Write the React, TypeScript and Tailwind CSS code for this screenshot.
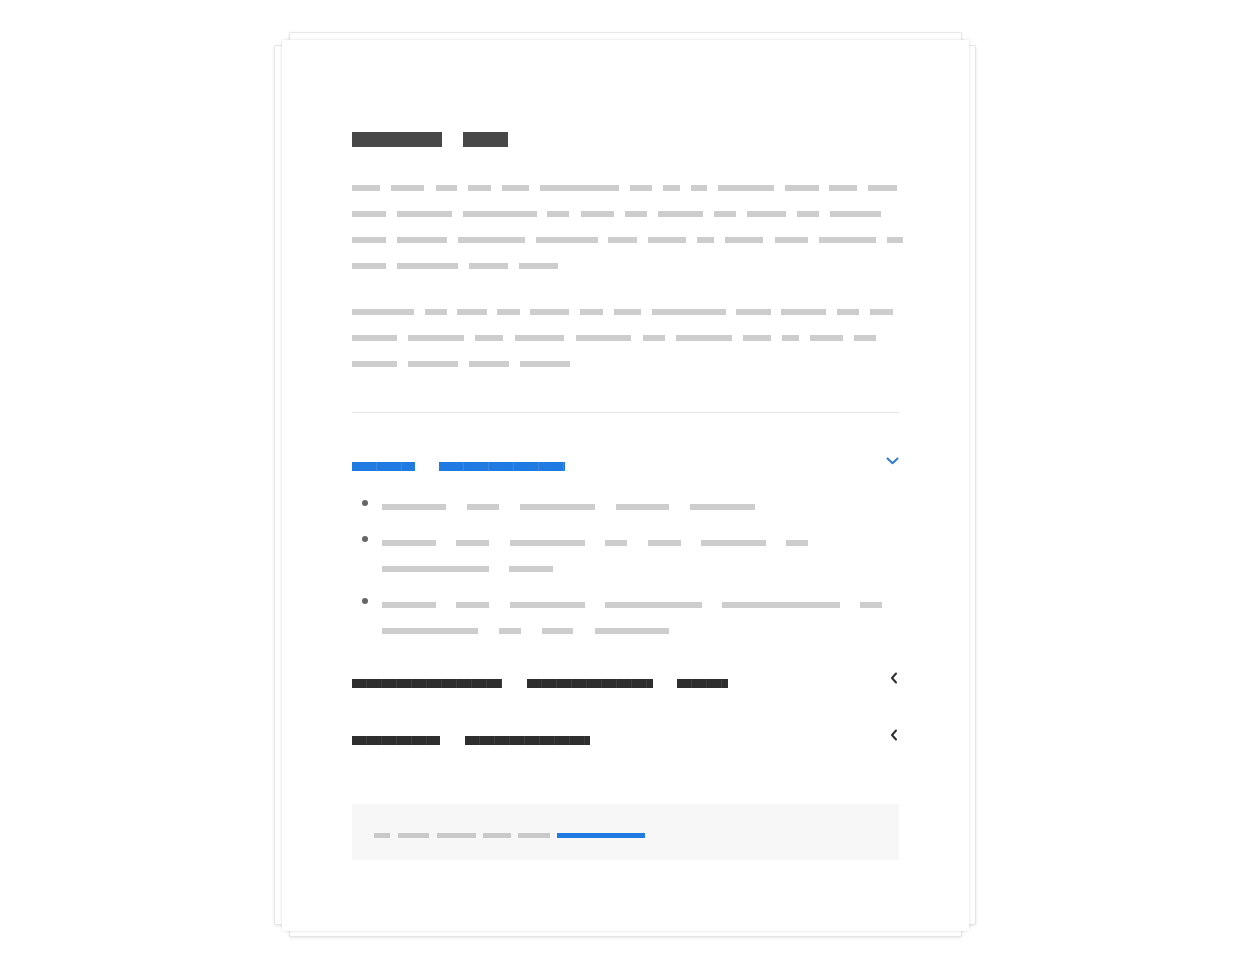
import React from "react";

type Seg = [number, number];

function Bars({
  segs,
  origin,
  color,
  h,
  rowH,
  pattern,
}: {
  segs: Seg[];
  origin: number;
  color: string;
  h: number;
  rowH: number;
  pattern?: string;
}) {
  let prev = origin;
  return (
    <div className="flex items-center whitespace-nowrap" style={{ height: rowH }}>
      {segs.map(([s, e], i) => {
        const ml = s - prev;
        prev = e;
        return (
          <span
            key={i}
            className="block shrink-0"
            style={{
              marginLeft: ml,
              width: e - s,
              height: h,
              background: pattern ?? color,
            }}
          />
        );
      })}
    </div>
  );
}

const GREY = "#cdcdcd";
const DARK_PATTERN =
  "repeating-linear-gradient(90deg,#2e2e2e 0px,#2e2e2e 14px,#3d3d3d 14px,#3d3d3d 15px)";
const BLUE_PATTERN =
  "repeating-linear-gradient(90deg,#1f7be1 0px,#1f7be1 24px,#3a8ae4 24px,#3a8ae4 25px)";

const P1: Seg[][] = [
  [[352, 380], [391, 424], [436, 457], [468, 491], [502, 529], [540, 619], [630, 652], [663, 680], [691, 707], [718, 774], [785, 819], [829, 857], [868, 897]],
  [[352, 386], [397, 452], [463, 537], [547, 569], [581, 614], [625, 647], [658, 703], [714, 736], [747, 786], [797, 819], [830, 881]],
  [[352, 386], [397, 447], [458, 525], [536, 598], [608, 637], [648, 686], [697, 714], [725, 763], [775, 808], [819, 876], [887, 903]],
  [[352, 386], [397, 458], [469, 508], [519, 558]],
];

const P2: Seg[][] = [
  [[352, 414], [425, 447], [457, 487], [497, 520], [530, 569], [580, 603], [614, 641], [652, 726], [736, 771], [781, 826], [837, 859], [870, 893]],
  [[352, 397], [408, 464], [475, 503], [515, 564], [576, 631], [643, 665], [676, 732], [743, 771], [782, 799], [810, 843], [854, 876]],
  [[352, 397], [408, 458], [469, 509], [520, 570]],
];

const BULLETS: Seg[][][] = [
  [[[382, 446], [467, 499], [520, 595], [616, 669], [690, 755]]],
  [
    [[382, 436], [456, 489], [510, 585], [605, 627], [648, 681], [701, 766], [786, 808]],
    [[382, 489], [509, 553]],
  ],
  [
    [[382, 436], [456, 489], [510, 585], [605, 702], [722, 840], [860, 882]],
    [[382, 478], [499, 521], [542, 573], [595, 669]],
  ],
];

function ChevronDown() {
  return (
    <svg width="13" height="8" viewBox="0 0 13 8" fill="none" className="block">
      <path d="M1.5 1.5 L6.5 6.3 L11.5 1.5" stroke="#2f7bd6" strokeWidth="2" strokeLinecap="round" strokeLinejoin="round" />
    </svg>
  );
}

function ChevronLeft() {
  return (
    <svg width="8" height="12" viewBox="0 0 8 12" fill="none" className="block">
      <path d="M6 1.5 L2 6 L6 10.5" stroke="#2e2e2e" strokeWidth="2" strokeLinecap="round" strokeLinejoin="round" />
    </svg>
  );
}

export default function App() {
  return (
    <div className="min-h-[971px] w-full bg-white pt-[40px] font-['Liberation_Sans',Arial,sans-serif]">
      <div className="relative mx-auto h-[891px] w-[687px]">
        {/* back sheets */}
        <div className="absolute left-[-8px] right-[-7px] top-[5px] bottom-[6px] rounded-[2px] border border-[#e6e6e6] bg-white shadow-[0_1px_3px_rgba(0,0,0,0.10)]" />
        <div className="absolute left-[7px] right-[7px] top-[-8px] bottom-[-6px] rounded-[2px] border border-[#e6e6e6] bg-white shadow-[0_1px_3px_rgba(0,0,0,0.10)]" />
        {/* main sheet */}
        <div className="relative h-full w-full bg-white px-[70px] pt-[92px] shadow-[0_0_3px_rgba(0,0,0,0.14)]">
          {/* title */}
          <Bars segs={[[352, 442], [463, 508]]} origin={352} color="#474747" h={15} rowH={15} />

          {/* paragraph 1 */}
          <div className="mt-[28px]">
            {P1.map((l, i) => (
              <Bars key={i} segs={l} origin={352} color={GREY} h={6} rowH={26} />
            ))}
          </div>

          {/* paragraph 2 */}
          <div className="mt-[20px]">
            {P2.map((l, i) => (
              <Bars key={i} segs={l} origin={352} color={GREY} h={6} rowH={26} />
            ))}
          </div>

          <div className="mt-[35px] h-px w-full bg-[#e8e8e8]" />

          {/* accordion 1 open */}
          <div className="mt-[44px] flex items-start justify-between">
            <div className="pt-[5px]">
              <Bars segs={[[352, 415], [439, 565]]} origin={352} color="#1f7be1" h={9} rowH={9} pattern={BLUE_PATTERN} />
            </div>
            <ChevronDown />
          </div>

          <div className="mt-[23px] flex flex-col gap-[10px]">
            {BULLETS.map((item, i) => (
              <div key={i} className="flex items-start">
                <span className="ml-[10px] mt-[6px] block h-[6px] w-[6px] shrink-0 rounded-full bg-[#666]" />
                <div className="ml-[14px]">
                  {item.map((l, j) => (
                    <Bars key={j} segs={l} origin={382} color={GREY} h={6} rowH={26} />
                  ))}
                </div>
              </div>
            ))}
          </div>

          {/* accordion 2 */}
          <div className="mt-[28px] flex items-start justify-between">
            <div className="pt-[7px]">
              <Bars segs={[[352, 502], [527, 653], [677, 728]]} origin={352} color="#2c2c2c" h={9} rowH={9} pattern={DARK_PATTERN} />
            </div>
            <div className="mr-[1px]">
              <ChevronLeft />
            </div>
          </div>

          {/* accordion 3 */}
          <div className="mt-[41px] flex items-start justify-between">
            <div className="pt-[7px]">
              <Bars segs={[[352, 440], [465, 590]]} origin={352} color="#2c2c2c" h={9} rowH={9} pattern={DARK_PATTERN} />
            </div>
            <div className="mr-[1px]">
              <ChevronLeft />
            </div>
          </div>

          {/* footer note */}
          <div className="mt-[59px] h-[56px] w-full bg-[#f7f7f7] px-[22px] pt-[29px]">
            <div className="flex items-start">
              <Bars
                segs={[[374, 390], [398, 429], [437, 476], [483, 511], [518, 550]]}
                origin={374}
                color="#c9c9c9"
                h={5}
                rowH={5}
              />
              <span className="ml-[7px] block h-[5px] w-[88px] bg-[#1f7be1]" />
            </div>
          </div>
        </div>
      </div>
    </div>
  );
}
